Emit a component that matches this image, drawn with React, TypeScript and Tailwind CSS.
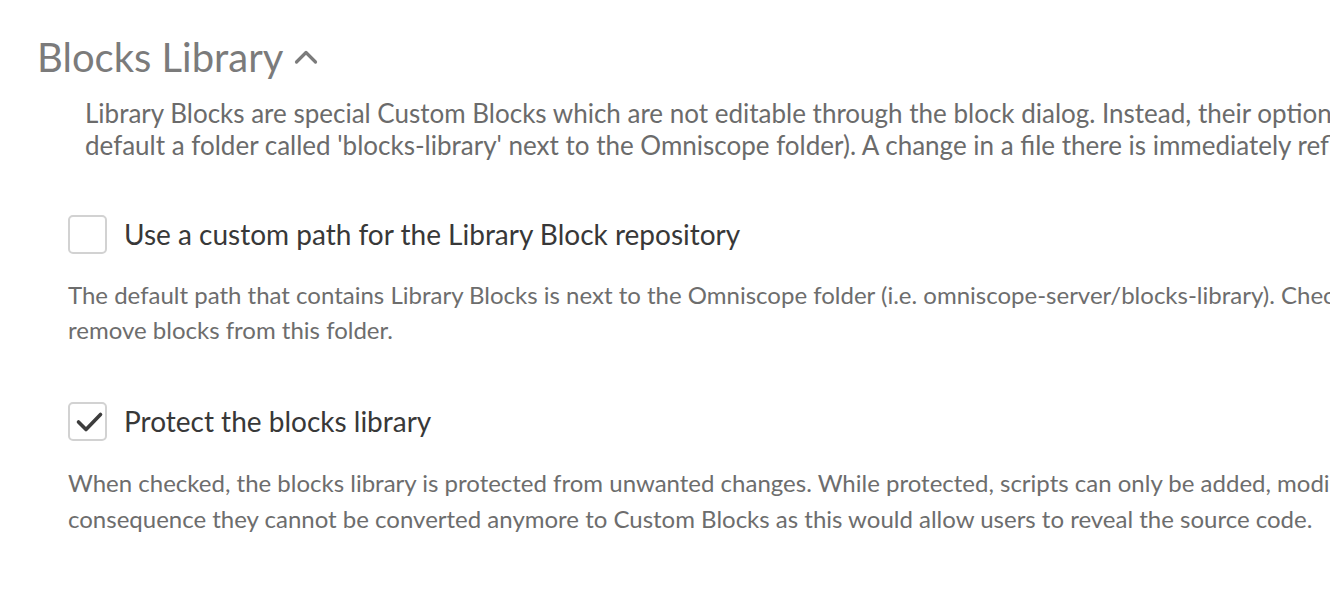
import { useState } from 'react';

function Check({ checked, onClick }: { checked: boolean; onClick: () => void }) {
  return (
    <button
      onClick={onClick}
      className="w-[39px] h-[39px] shrink-0 rounded-[5px] border-2 border-[#d2d2d2] bg-white relative"
    >
      {checked && (
        <svg width="39" height="39" viewBox="0 0 39 39" fill="none" stroke="#3d3d3d" strokeWidth={3.6} strokeLinecap="round" strokeLinejoin="round" className="absolute -left-[2px] -top-[2px]">
          <path d="M10.5 20l7.5 7.5L32.5 12.5" />
        </svg>
      )}
    </button>
  );
}

export default function App() {
  const [custom, setCustom] = useState(false);
  const [protect, setProtect] = useState(true);

  return (
    <div className="w-[1330px] h-[592px] overflow-hidden bg-white font-['Lato','Noto_Sans',sans-serif]">
      <div className="w-[1800px] pl-[37px] pt-[33px]">
        {/* Heading */}
        <div className="flex items-center gap-[11px] text-[#7b7b7b]">
          <h2 className="text-[40px] leading-[48px]">Blocks Library</h2>
          <svg width="24" height="16" viewBox="0 0 24 16" fill="none" stroke="#7b7b7b" strokeWidth={3.2} strokeLinecap="round" strokeLinejoin="round">
            <path d="M2.5 13L12 3.5l9.5 9.5" />
          </svg>
        </div>

        <p className="mt-[16px] ml-[48px] text-[26px] leading-[32px] text-[#6b6b6b] whitespace-nowrap">
          Library Blocks are special Custom Blocks which are not editable through the block dialog. Instead, their options are defined by files in a folder (by
          <br />
          default a folder called 'blocks-library' next to the Omniscope folder). A change in a file there is immediately reflected in all blocks using it.
        </p>

        <div className="ml-[31px] mt-[54px]">
          <div className="flex items-center gap-[17px]">
            <Check checked={custom} onClick={() => setCustom(!custom)} />
            <span className="text-[28px] leading-[39px] text-[#383838]">Use a custom path for the Library Block repository</span>
          </div>
          <p className="mt-[23px] text-[24px] leading-[35px] text-[#6d6d6d] whitespace-nowrap">
            The default path that contains Library Blocks is next to the Omniscope folder (i.e. omniscope-server/blocks-library). Check this option to add or
            <br />
            remove blocks from this folder.
          </p>

          <div className="flex items-center gap-[17px] mt-[55px]">
            <Check checked={protect} onClick={() => setProtect(!protect)} />
            <span className="text-[28px] leading-[39px] text-[#383838]">Protect the blocks library</span>
          </div>
          <p className="mt-[24px] text-[24px] leading-[36px] text-[#6d6d6d] whitespace-nowrap">
            When checked, the blocks library is protected from unwanted changes. While protected, scripts can only be added, modified or removed by an admin. As a
            <br />
            consequence they cannot be converted anymore to Custom Blocks as this would allow users to reveal the source code.
          </p>
        </div>
      </div>
    </div>
  );
}
